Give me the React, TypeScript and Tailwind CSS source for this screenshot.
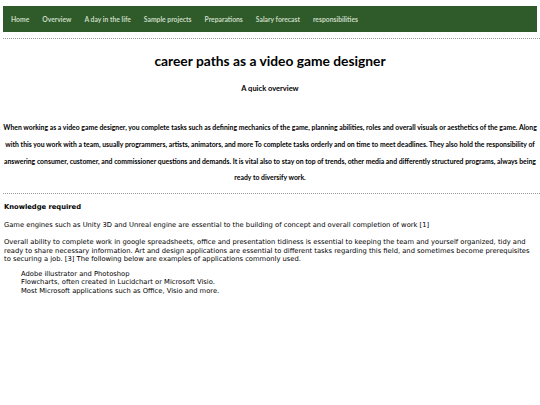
const links = [
  "Home",
  "Overview",
  "A day in the life",
  "Sample projects",
  "Preparations",
  "Salary forecast",
  "responsibilities",
];

const tools = [
  "Adobe illustrator and Photoshop",
  "Flowcharts, often created in Lucidchart or Microsoft Visio.",
  "Most Microsoft applications such as Office, Visio and more.",
];

export default function App() {
  return (
    <div className="min-h-screen bg-white pt-[6px] text-black">
      <nav className="mx-[3px] flex h-[26px] items-center gap-[13px] bg-[#2e5b29] px-[8px] font-['Lato',sans-serif] text-[6.75px] font-bold text-[#c9d9c4]">
        {links.map(l => (
          <a key={l} href="#" className="whitespace-nowrap">
            {l}
          </a>
        ))}
      </nav>

      <div className="ml-[3px] mt-[6px] border-t border-dotted border-[#999]" />

      <header className="mt-[13px] text-center font-['Lato',sans-serif] font-bold">
        <h1 className="text-[13.8px] leading-[18px]">career paths as a video game designer</h1>
        <h2 className="mt-[13px] text-[7.5px]">A quick overview</h2>
      </header>

      <p className="mx-[3px] mt-[25px] text-center font-['Lato',sans-serif] text-[6.85px] font-bold leading-[16.7px]">
        When working as a video game designer, you complete tasks such as defining mechanics of the game, planning abilities, roles and overall visuals or aesthetics of the game. Along with this you work with a team, usually programmers, artists, animators, and more To complete tasks orderly and on time to meet deadlines. They also hold the responsibility of answering consumer, customer, and commissioner questions and demands. It is vital also to stay on top of trends, other media and differently structured programs, always being ready to diversify work.
      </p>

      <div className="ml-[3px] mt-[7px] border-t border-dotted border-[#999]" />

      <section className="px-[4px] font-['DejaVu_Sans',sans-serif] text-[6.75px] leading-[8.5px]">
        <h3 className="mt-[9px] font-bold">Knowledge required</h3>
        <p className="mt-[9px]">
          Game engines such as Unity 3D and Unreal engine are essential to the building of concept and overall completion of work [1]
        </p>
        <p className="mt-[9px]">
          Overall ability to complete work in google spreadsheets, office and presentation tidiness is essential to keeping the team and yourself organized, tidy and ready to share necessary information. Art and design applications are essential to different tasks regarding this field, and sometimes become prerequisites to securing a job. [3] The following below are examples of applications commonly used.
        </p>
        <ul className="mt-[6px] pl-[17px]">
          {tools.map(t => (
            <li key={t}>{t}</li>
          ))}
        </ul>
      </section>
    </div>
  );
}
